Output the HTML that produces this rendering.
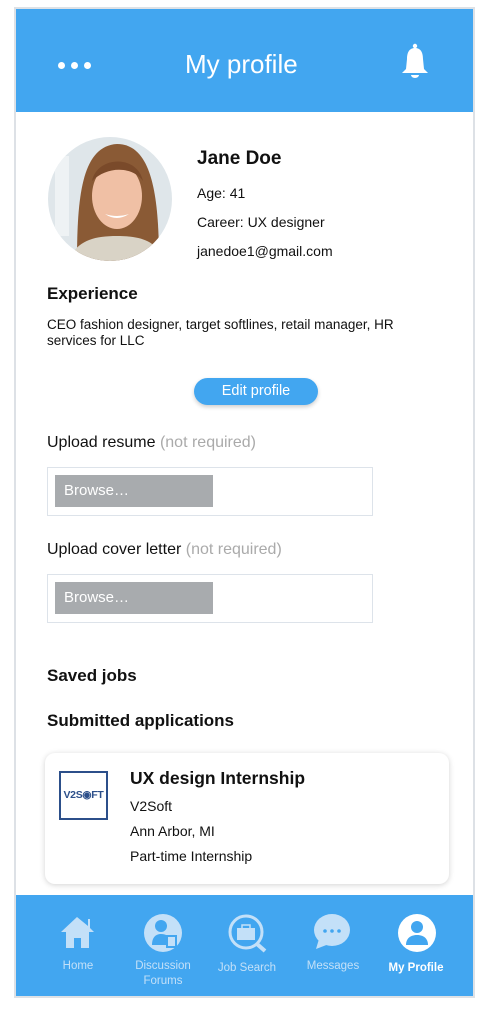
<!DOCTYPE html>
<html><head><meta charset="utf-8"><style>
*{margin:0;padding:0;box-sizing:border-box}
body{width:492px;height:1014px;background:#fff;font-family:"Liberation Sans",sans-serif;position:relative;overflow:hidden;color:#111}
.a{position:absolute;white-space:nowrap}
</style></head><body>
<div class="a" style="left:14px;top:7px;width:461px;height:991px;border:2px solid #dde1e6"></div>
<div class="a" style="left:16px;top:9px;width:457px;height:103px;background:#42a6f0"></div>
<div class="a" style="left:58px;top:62px;width:7px;height:7px;border-radius:50%;background:#fff;box-shadow:13px 0 #fff,26px 0 #fff"></div>
<div class="a" style="left:185px;top:49px;font-size:26px;color:#fff">My profile</div>
<svg class="a" style="left:400px;top:43px" width="30" height="38" viewBox="0 0 30 38"><circle cx="15" cy="3" r="2.2" fill="#fff"/><path d="M15 5C9 5 7 10 7 16L6 26 2 30H28L24 26 23 16C23 10 21 5 15 5Z" fill="#fff"/><path d="M11 32H19A4 3 0 0 1 11 32Z" fill="#fff"/></svg>

<svg class="a" style="left:47px;top:136px" width="126" height="126" viewBox="0 0 126 126">
<defs><clipPath id="c"><circle cx="63" cy="63" r="62"/></clipPath></defs>
<g clip-path="url(#c)"><rect width="126" height="126" fill="#dfe6ea"/><rect x="8" y="20" width="14" height="80" fill="#eef2f4"/>
<path d="M30 126C30 60 35 10 70 8C105 8 112 60 112 126Z" fill="#8a5a35"/>
<ellipse cx="70" cy="60" rx="25" ry="33" fill="#f0c0a5"/>
<path d="M20 126C30 105 45 100 70 100C95 100 110 105 118 126Z" fill="#d9d3c6"/>
<path d="M45 45C50 20 90 18 96 45C85 30 60 30 45 45Z" fill="#7a4a2a"/>
<path d="M58 78Q70 86 82 78Q70 82 58 78Z" fill="#fff"/></g></svg>

<div class="a" style="left:197px;top:148px;font-size:19px;font-weight:bold">Jane Doe</div>
<div class="a" style="left:197px;top:185px;font-size:14px">Age: 41</div>
<div class="a" style="left:197px;top:214px;font-size:14px">Career: UX designer</div>
<div class="a" style="left:197px;top:243px;font-size:14px">janedoe1@gmail.com</div>
<div class="a" style="left:47px;top:284px;font-size:17px;font-weight:bold">Experience</div>
<div class="a" style="left:47px;top:317px;font-size:13.5px;line-height:16px;white-space:normal;width:380px">CEO fashion designer, target softlines, retail manager, HR services for LLC</div>

<div class="a" style="left:194px;top:378px;width:124px;height:27px;border-radius:14px;background:#42a6f0;color:#fff;font-size:14.5px;text-align:center;line-height:27px;box-shadow:0 2px 4px rgba(0,0,0,.2)">Edit profile</div>

<div class="a" style="left:47px;top:434px;font-size:16px">Upload resume <span style="color:#aaa">(not required)</span></div>
<div class="a" style="left:47px;top:467px;width:326px;height:49px;border:1px solid #dde3ea"></div>
<div class="a" style="left:55px;top:475px;width:158px;height:32px;background:#a8abae;color:#fff;font-size:15px;line-height:32px;padding-left:9px">Browse…</div>
<div class="a" style="left:47px;top:541px;font-size:16px">Upload cover letter <span style="color:#aaa">(not required)</span></div>
<div class="a" style="left:47px;top:574px;width:326px;height:49px;border:1px solid #dde3ea"></div>
<div class="a" style="left:55px;top:582px;width:158px;height:32px;background:#a8abae;color:#fff;font-size:15px;line-height:32px;padding-left:9px">Browse…</div>

<div class="a" style="left:47px;top:666px;font-size:17px;font-weight:bold">Saved jobs</div>
<div class="a" style="left:47px;top:711px;font-size:17px;font-weight:bold">Submitted applications</div>

<div class="a" style="left:45px;top:753px;width:404px;height:131px;border-radius:10px;background:#fff;box-shadow:0 1px 6px rgba(0,0,0,.18)"></div>
<div class="a" style="left:59px;top:771px;width:49px;height:49px;border:2px solid #2c4f8a;color:#2c4f8a;font-size:10.5px;font-weight:bold;text-align:center;line-height:45px;letter-spacing:-0.3px">V2S◉FT</div>
<div class="a" style="left:130px;top:768px;font-size:17.5px;font-weight:bold">UX design Internship</div>
<div class="a" style="left:130px;top:798px;font-size:14px">V2Soft</div>
<div class="a" style="left:130px;top:823px;font-size:14px">Ann Arbor, MI</div>
<div class="a" style="left:130px;top:848px;font-size:14px">Part-time Internship</div>

<div class="a" style="left:16px;top:895px;width:457px;height:101px;background:#42a6f0"></div>
<svg class="a" style="left:60px;top:914px" width="36" height="36" viewBox="0 0 36 36"><path d="M17 3L1 18H6V34H14V24H21V34H29V18H34L30 14V5H28V12Z" fill="#c3e0f8"/></svg>
<svg class="a" style="left:143px;top:913px" width="40" height="40" viewBox="0 0 40 40"><circle cx="20" cy="20" r="19" fill="#c3e0f8"/><circle cx="18" cy="13" r="6" fill="#42a6f0"/><path d="M9 32C9 24 13 21 18 21C23 21 25 23 26 25V32Z" fill="#42a6f0"/><rect x="23" y="22" width="11" height="13" fill="#42a6f0"/><rect x="25" y="24" width="7" height="9" fill="#c3e0f8"/></svg>
<svg class="a" style="left:227px;top:914px" width="42" height="42" viewBox="0 0 42 42"><circle cx="19" cy="18" r="16" fill="none" stroke="#c3e0f8" stroke-width="3"/><path d="M30 30L38 37" stroke="#c3e0f8" stroke-width="4"/><rect x="10" y="14" width="18" height="12" fill="#c3e0f8"/><rect x="15" y="11" width="8" height="4" fill="none" stroke="#c3e0f8" stroke-width="1.5"/></svg>
<svg class="a" style="left:313px;top:913px" width="38" height="38" viewBox="0 0 38 38"><ellipse cx="19" cy="17" rx="18" ry="16" fill="#c3e0f8"/><path d="M6 26L3 36 16 31Z" fill="#c3e0f8"/><circle cx="12" cy="18" r="1.8" fill="#42a6f0"/><circle cx="19" cy="18" r="1.8" fill="#42a6f0"/><circle cx="26" cy="18" r="1.8" fill="#42a6f0"/></svg>
<svg class="a" style="left:397px;top:913px" width="40" height="40" viewBox="0 0 40 40"><circle cx="20" cy="20" r="19" fill="#fff"/><circle cx="20" cy="14" r="6" fill="#42a6f0"/><path d="M9 32C9 25 14 22 20 22C26 22 31 25 31 32Z" fill="#42a6f0"/></svg>
<div class="a" style="left:48px;top:960px;width:60px;text-align:center;font-size:11.5px;color:#c3e0f8">Home</div>
<div class="a" style="left:128px;top:959px;width:70px;text-align:center;font-size:11.5px;line-height:15px;color:#c3e0f8">Discussion<br>Forums</div>
<div class="a" style="left:212px;top:962px;width:70px;text-align:center;font-size:11.5px;color:#c3e0f8">Job Search</div>
<div class="a" style="left:298px;top:960px;width:70px;text-align:center;font-size:11.5px;color:#c3e0f8">Messages</div>
<div class="a" style="left:380px;top:962px;width:72px;text-align:center;font-size:11.5px;font-weight:bold;color:#fff">My Profile</div>
</body></html>
